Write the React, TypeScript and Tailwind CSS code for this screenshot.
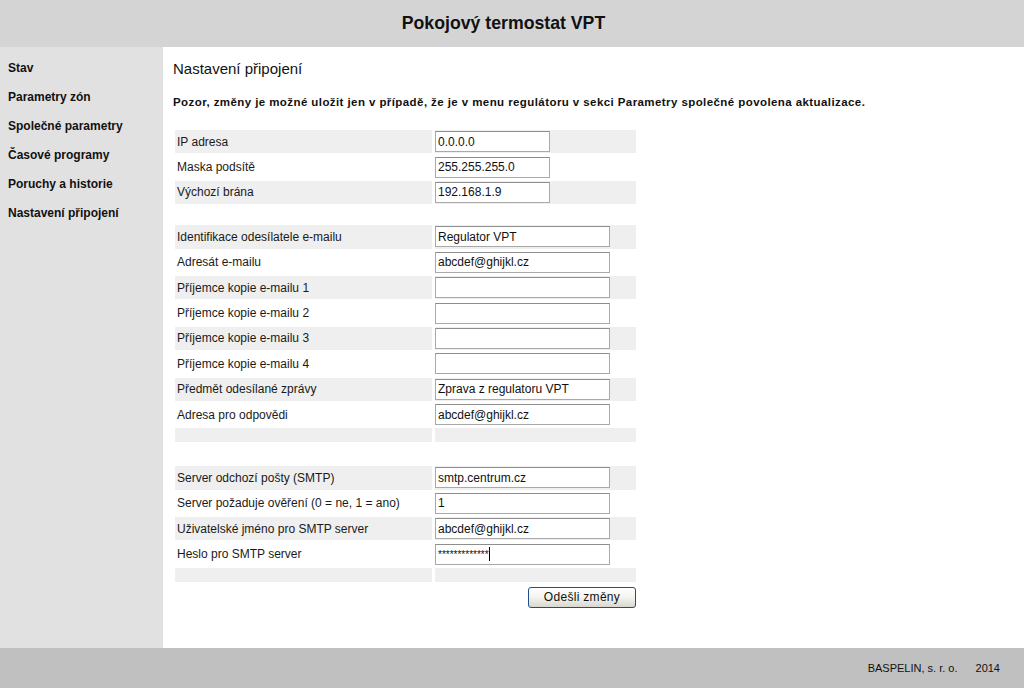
import React from "react"

const menu = [
  "Stav",
  "Parametry zón",
  "Společné parametry",
  "Časové programy",
  "Poruchy a historie",
  "Nastavení připojení",
]

type Row = { label: string; value?: string; wide?: boolean; password?: boolean }

const network: Row[] = [
  { label: "IP adresa", value: "0.0.0.0" },
  { label: "Maska podsítě", value: "255.255.255.0" },
  { label: "Výchozí brána", value: "192.168.1.9" },
]

const email: Row[] = [
  { label: "Identifikace odesílatele e-mailu", value: "Regulator VPT", wide: true },
  { label: "Adresát e-mailu", value: "abcdef@ghijkl.cz", wide: true },
  { label: "Příjemce kopie e-mailu 1", value: "", wide: true },
  { label: "Příjemce kopie e-mailu 2", value: "", wide: true },
  { label: "Příjemce kopie e-mailu 3", value: "", wide: true },
  { label: "Příjemce kopie e-mailu 4", value: "", wide: true },
  { label: "Předmět odesílané zprávy", value: "Zprava z regulatoru VPT", wide: true },
  { label: "Adresa pro odpovědi", value: "abcdef@ghijkl.cz", wide: true },
]

const smtp: Row[] = [
  { label: "Server odchozí pošty (SMTP)", value: "smtp.centrum.cz", wide: true },
  { label: "Server požaduje ověření (0 = ne, 1 = ano)", value: "1", wide: true },
  { label: "Uživatelské jméno pro SMTP server", value: "abcdef@ghijkl.cz", wide: true },
  { label: "Heslo pro SMTP server", value: "*************", wide: true, password: true },
]

function Field({ row }: { row: Row }) {
  const width = row.wide ? "w-[175px]" : "w-[115px]"
  if (row.password) {
    return (
      <div
        className={`${width} h-[21px] bg-white border border-[#a9a9a9] border-t-[#8e8e8e] flex items-center pl-[2px] text-[10px] leading-none text-[#111]`}
      >
        <span className="mt-[1px]">{row.value}</span>
        <span className="w-px h-[14px] bg-black" />
      </div>
    )
  }
  return (
    <input
      readOnly
      defaultValue={row.value}
      className={`${width} h-[21px] bg-white border border-[#a9a9a9] border-t-[#8e8e8e] px-[2px] text-[12px] text-[#111] outline-none`}
    />
  )
}

function Table({ rows, filler }: { rows: Row[]; filler?: boolean }) {
  return (
    <div className="ml-[2px] flex flex-col gap-[2px] w-[461px]">
      {rows.map((row, i) => (
        <div key={row.label} className="flex gap-[3px] h-[23.4px]">
          <div
            className={`w-[257px] flex items-center pl-[2px] text-[12px] text-[#1a1a1a] ${
              i % 2 === 0 ? "bg-[#efefef]" : ""
            }`}
          >
            {row.label}
          </div>
          <div className={`flex-1 flex items-center ${i % 2 === 0 ? "bg-[#efefef]" : ""}`}>
            <Field row={row} />
          </div>
        </div>
      ))}
      {filler && (
        <div className="flex gap-[3px] h-[14px]">
          <div className="w-[257px] bg-[#efefef]" />
          <div className="flex-1 bg-[#efefef]" />
        </div>
      )}
    </div>
  )
}

export default function App() {
  return (
    <div
      className="w-[1024px] h-[688px] flex flex-col bg-white text-black overflow-hidden"
      style={{ fontFamily: '"Liberation Sans", Arial, sans-serif' }}
    >
      {/* Header */}
      <div className="h-[47px] shrink-0 bg-[#d4d4d4] flex items-center justify-center pr-[17px]">
        <h1 className="text-[17.7px] font-bold text-[#111] -mt-[1px]">Pokojový termostat VPT</h1>
      </div>

      <div className="flex flex-1 min-h-0">
        {/* Sidebar */}
        <div className="w-[163px] shrink-0 bg-[#e1e1e1] pt-[14px] pl-[8px] flex flex-col gap-[15px]">
          {menu.map((item) => (
            <div key={item} className="text-[12px] font-bold leading-[14px] text-[#111]">
              {item}
            </div>
          ))}
        </div>

        {/* Content */}
        <div className="flex-1 pl-[10px] pt-[13px]">
          <h2 className="text-[15px] leading-[17px] text-[#111]">Nastavení připojení</h2>
          <p className="mt-[18px] text-[11.5px] leading-[14px] font-bold tracking-[0.42px] text-[#111]">
            Pozor, změny je možné uložit jen v případě, že je v menu regulátoru v sekci Parametry
            společné povolena aktualizace.
          </p>

          <div className="mt-[21px]">
            <Table rows={network} />
          </div>
          <div className="mt-[21px]">
            <Table rows={email} filler />
          </div>
          <div className="mt-[24px]">
            <Table rows={smtp} filler />
          </div>

          <div className="w-[463px] flex justify-end mt-[5px]">
            <button className="w-[108px] h-[21px] rounded-[3px] border border-[#1f4f86] bg-gradient-to-b from-white via-[#f3f3ef] to-[#d8d8d0] text-[12px] text-[#111] tracking-[0.3px]">
              Odešli změny
            </button>
          </div>
        </div>
      </div>

      {/* Footer */}
      <div className="h-[40px] shrink-0 bg-[#c0c0c0] flex items-center justify-end pr-[24px] text-[11px] text-[#111]">
        <span>BASPELIN, s. r. o.</span>
        <span className="ml-[18px]">2014</span>
      </div>
    </div>
  )
}
